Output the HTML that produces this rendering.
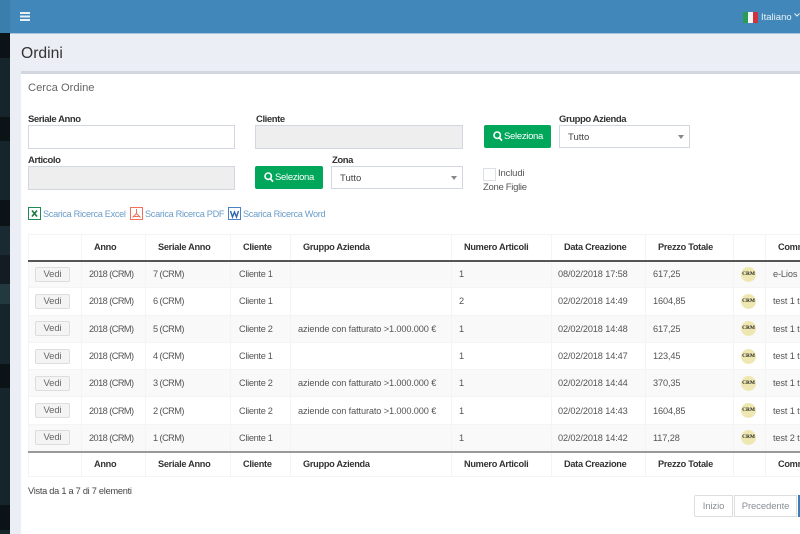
<!DOCTYPE html>
<html lang="it">
<head>
<meta charset="utf-8">
<title>Ordini</title>
<style>
html,body{margin:0;padding:0;width:800px;height:534px;overflow:hidden;background:#ebeef5;font-family:"Liberation Sans",sans-serif;color:#555;}
*{box-sizing:border-box;}
.a{position:absolute;white-space:nowrap;}
.side{position:absolute;left:0;width:10px;}
#top{position:absolute;left:10px;top:0;width:790px;height:33px;background:#4287b9;}
label.a{font-weight:bold;font-size:9.5px;letter-spacing:-.42px;color:#333;line-height:12px;}
.inp{position:absolute;border:1px solid #d2d6de;background:#fff;height:24px;}
.dis{background:#eee;}
.btn{position:absolute;background:#00a65a;border-radius:2px;color:#fff;font-size:9.5px;letter-spacing:-.3px;height:23px;line-height:24px;width:68px;}
.btn svg{position:absolute;left:9px;top:6px;}
.btn span{position:absolute;left:20px;top:0;}
.sel{position:absolute;border:1px solid #d2d6de;background:#fff;height:23px;font-size:9.5px;line-height:23px;padding-left:8px;color:#444;}
.sel i{position:absolute;top:9px;width:0;height:0;border-left:3px solid transparent;border-right:3px solid transparent;border-top:4px solid #888;}
.lnk{color:#6a9cc9;font-size:9.2px;letter-spacing:-.32px;line-height:12px;}
table{position:absolute;left:28px;top:234px;width:800px;table-layout:fixed;border-collapse:collapse;font-size:9.2px;letter-spacing:-.12px;color:#555;}
th,td{border:1px solid #f4f4f4;padding:0 0 0 7px;text-align:left;overflow:hidden;white-space:nowrap;}
th{color:#333;font-weight:bold;height:26px;letter-spacing:-.28px;}
thead th{border-bottom:2px solid #555;}
tfoot th{border-top:2px solid #999;height:25px;}
th.c{padding:0;padding-left:12px;}
td{height:27.3px;}
td:nth-child(2),td:nth-child(3){letter-spacing:-.55px;}
td:nth-child(4){letter-spacing:-.3px;padding-left:8px;}
td:nth-child(7){padding-left:6px;}
tbody tr:nth-child(odd) td{background:#f9f9f9;}
.v{display:block;width:35px;height:15px;border:1px solid #ddd;border-radius:2px;background:#f4f4f4;color:#666;font-size:9.5px;line-height:14px;text-align:center;margin-left:0;letter-spacing:-.1px;}
td.b{padding-left:6px;}
.crm{display:block;width:15px;height:15px;border-radius:50%;background:#efe7b2;color:#222;font:bold 5.4px/15px "Liberation Serif",serif;text-align:center;letter-spacing:0;}
td.r{padding-left:7px;}
.pg{position:absolute;top:495px;height:22px;border:1px solid #ddd;background:#fff;color:#8a8f96;font-size:9.5px;line-height:21px;text-align:center;letter-spacing:-.1px;}
</style>
</head>
<body>
<div class="side" style="top:0;height:33px;background:#3a7fab"></div>
<div class="side" style="top:33px;height:25px;background:#0c1317"></div>
<div class="side" style="top:58px;height:59px;background:#16242c"></div>
<div class="side" style="top:117px;height:24px;background:#0c1317"></div>
<div class="side" style="top:141px;height:59px;background:#16242c"></div>
<div class="side" style="top:200px;height:26px;background:#0c1317"></div>
<div class="side" style="top:226px;height:29px;background:#1a2a33"></div>
<div class="side" style="top:255px;height:29px;background:#121c22"></div>
<div class="side" style="top:284px;height:20px;background:#22393f"></div>
<div class="side" style="top:304px;height:60px;background:#16242c"></div>
<div class="side" style="top:364px;height:24px;background:#0c1317"></div>
<div class="side" style="top:388px;height:117px;background:#16242c"></div>
<div class="side" style="top:505px;height:25px;background:#0c1317"></div>
<div class="side" style="top:530px;height:4px;background:#16242c"></div>

<div id="top"></div>
<div class="a" style="left:10px;top:33px;width:790px;height:1px;background:#a9c6dc"></div>
<svg class="a" style="left:20px;top:12px" width="10" height="9" viewBox="0 0 10 9"><path d="M0 1h10M0 4.5h10M0 8h10" stroke="#e6eff6" stroke-width="2"/></svg>
<svg class="a" style="left:743px;top:12px" width="15" height="11" viewBox="0 0 15 11"><rect width="5" height="11" fill="#2a9a55"/><rect x="5" width="5" height="11" fill="#f4f4f4"/><rect x="10" width="5" height="11" fill="#d0333e"/></svg>
<div class="a" style="left:761px;top:10px;color:#e8f1f7;font-size:9.5px;line-height:15px;">Italiano</div>
<svg class="a" style="left:794px;top:13px" width="6" height="4" viewBox="0 0 6 4"><path d="M.5.5 3 3 5.5.5" fill="none" stroke="#e8f1f7" stroke-width="1"/></svg>

<div class="a" style="left:21px;top:44px;font-size:15.7px;line-height:19px;color:#333">Ordini</div>

<div class="a" style="left:21px;top:71px;width:779px;height:463px;background:#fff;border-top:3px solid #d2d6de"></div>
<div class="a" style="left:28px;top:81px;font-size:11.2px;line-height:14px;color:#666">Cerca Ordine</div>

<label class="a" style="left:28px;top:114px">Seriale Anno</label>
<div class="inp" style="left:28px;top:125px;width:207px"></div>
<label class="a" style="left:28px;top:155px">Articolo</label>
<div class="inp dis" style="left:28px;top:166px;width:207px"></div>

<label class="a" style="left:256px;top:114px">Cliente</label>
<div class="inp dis" style="left:255px;top:125px;width:208px"></div>
<div class="btn" style="left:255px;top:166px"><svg width="10" height="11" viewBox="0 0 10 11"><circle cx="4.2" cy="4.2" r="3.2" fill="none" stroke="#fff" stroke-width="1.6"/><path d="M6.5 6.8 9 9.6" stroke="#fff" stroke-width="1.8"/></svg><span>Seleziona</span></div>
<label class="a" style="left:332px;top:155px">Zona</label>
<div class="sel" style="left:331px;top:166px;width:132px">Tutto<i style="right:5px"></i></div>

<div class="btn" style="left:484px;top:125px;width:67px"><svg width="10" height="11" viewBox="0 0 10 11"><circle cx="4.2" cy="4.2" r="3.2" fill="none" stroke="#fff" stroke-width="1.6"/><path d="M6.5 6.8 9 9.6" stroke="#fff" stroke-width="1.8"/></svg><span>Seleziona</span></div>
<label class="a" style="left:559px;top:114px">Gruppo Azienda</label>
<div class="sel" style="left:559px;top:125px;width:131px">Tutto<i style="right:5px"></i></div>

<div class="a" style="left:483px;top:168px;width:13px;height:13px;border:1px solid #dcdfe5;background:#fff"></div>
<div class="a" style="left:498px;top:168px;font-size:9.5px;line-height:12px;letter-spacing:-.15px;color:#555">Includi</div>
<div class="a" style="left:483px;top:182px;font-size:9.5px;line-height:12px;letter-spacing:-.3px;color:#555">Zone Figlie</div>

<svg class="a" style="left:28px;top:207px" width="13" height="13" viewBox="0 0 13 13"><rect x=".5" y=".5" width="12" height="12" fill="#fff" stroke="#1f8a55"/><path d="M4 3.5 9 9.5M9 3.5 4 9.5" stroke="#1f7a45" stroke-width="1.7"/></svg>
<div class="a lnk" style="left:43px;top:208px">Scarica Ricerca Excel</div>
<svg class="a" style="left:130px;top:207px" width="13" height="13" viewBox="0 0 13 13"><rect x=".5" y=".5" width="12" height="12" fill="#fff" stroke="#f0705a"/><path d="M6.5 2V6.5L2.5 10.5M6.5 6.5 10.5 10.5M3 9.5h7" fill="none" stroke="#f0705a"/></svg>
<div class="a lnk" style="left:145px;top:208px">Scarica Ricerca PDF</div>
<svg class="a" style="left:228px;top:207px" width="13" height="13" viewBox="0 0 13 13"><rect x=".5" y=".5" width="12" height="12" fill="#fff" stroke="#4a80c4"/><path d="M2.5 4 4.5 10 6.5 5 8.5 10 10.5 4" fill="none" stroke="#2f66ad" stroke-width="1.4"/></svg>
<div class="a lnk" style="left:243px;top:208px">Scarica Ricerca Word</div>

<table>
<colgroup><col style="width:53px"><col style="width:64px"><col style="width:85px"><col style="width:60px"><col style="width:161px"><col style="width:100px"><col style="width:94px"><col style="width:88px"><col style="width:32px"><col style="width:63px"></colgroup>
<thead><tr><th></th><th class="c">Anno</th><th class="c">Seriale Anno</th><th class="c">Cliente</th><th class="c">Gruppo Azienda</th><th class="c">Numero Articoli</th><th class="c">Data Creazione</th><th class="c">Prezzo Totale</th><th></th><th class="c">Commento</th></tr></thead>
<tbody>
<tr><td class="b"><span class="v">Vedi</span></td><td>2018 (CRM)</td><td>7 (CRM)</td><td>Cliente 1</td><td></td><td>1</td><td>08/02/2018 17:58</td><td>617,25</td><td class="r"><span class="crm">CRM</span></td><td>e-Lios ordine</td></tr>
<tr><td class="b"><span class="v">Vedi</span></td><td>2018 (CRM)</td><td>6 (CRM)</td><td>Cliente 1</td><td></td><td>2</td><td>02/02/2018 14:49</td><td>1604,85</td><td class="r"><span class="crm">CRM</span></td><td>test 1 test</td></tr>
<tr><td class="b"><span class="v">Vedi</span></td><td>2018 (CRM)</td><td>5 (CRM)</td><td>Cliente 2</td><td>aziende con fatturato &gt;1.000.000 €</td><td>1</td><td>02/02/2018 14:48</td><td>617,25</td><td class="r"><span class="crm">CRM</span></td><td>test 1 test</td></tr>
<tr><td class="b"><span class="v">Vedi</span></td><td>2018 (CRM)</td><td>4 (CRM)</td><td>Cliente 1</td><td></td><td>1</td><td>02/02/2018 14:47</td><td>123,45</td><td class="r"><span class="crm">CRM</span></td><td>test 1 test</td></tr>
<tr><td class="b"><span class="v">Vedi</span></td><td>2018 (CRM)</td><td>3 (CRM)</td><td>Cliente 2</td><td>aziende con fatturato &gt;1.000.000 €</td><td>1</td><td>02/02/2018 14:44</td><td>370,35</td><td class="r"><span class="crm">CRM</span></td><td>test 1 test</td></tr>
<tr><td class="b"><span class="v">Vedi</span></td><td>2018 (CRM)</td><td>2 (CRM)</td><td>Cliente 2</td><td>aziende con fatturato &gt;1.000.000 €</td><td>1</td><td>02/02/2018 14:43</td><td>1604,85</td><td class="r"><span class="crm">CRM</span></td><td>test 1 test</td></tr>
<tr><td class="b"><span class="v">Vedi</span></td><td>2018 (CRM)</td><td>1 (CRM)</td><td>Cliente 1</td><td></td><td>1</td><td>02/02/2018 14:42</td><td>117,28</td><td class="r"><span class="crm">CRM</span></td><td>test 2 test</td></tr>
</tbody>
<tfoot><tr><th></th><th class="c">Anno</th><th class="c">Seriale Anno</th><th class="c">Cliente</th><th class="c">Gruppo Azienda</th><th class="c">Numero Articoli</th><th class="c">Data Creazione</th><th class="c">Prezzo Totale</th><th></th><th class="c">Commento</th></tr></tfoot>
</table>

<div class="a" style="left:28px;top:485px;font-size:9.2px;line-height:12px;letter-spacing:-.25px;color:#444">Vista da 1 a 7 di 7 elementi</div>

<div class="pg" style="left:694px;width:39px;border-radius:2px 0 0 2px">Inizio</div>
<div class="pg" style="left:734px;width:63px">Precedente</div>
<div class="a" style="left:798px;top:495px;width:2px;height:22px;background:#3c7fb8"></div>
</body>
</html>
